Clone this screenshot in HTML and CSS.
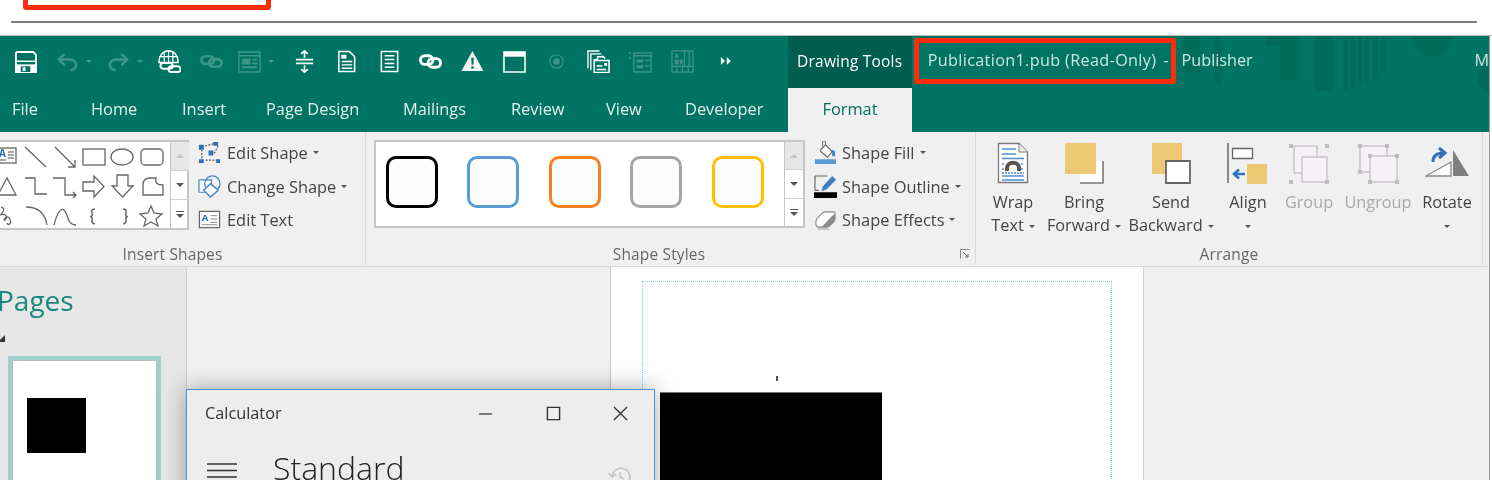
FILE: index.html
```html
<!DOCTYPE html>
<html lang="en">
<head>
<meta charset="utf-8">
<title>Publication1.pub (Read-Only) - Publisher</title>
<link rel="stylesheet" href="styles.css">
</head>
<body>
<div class="shot">
  <div class="top"><div class="rule"></div></div>
  <div class="redbox redbox-top"></div>
  <div class="window">
    <svg class="decor" viewBox="0 0 310 60" width="310" height="60" aria-hidden="true">
      <g fill="#006c5c">
        <rect x="3" y="0" width="17" height="36"/><rect x="35" y="0" width="7" height="48"/>
        <path d="M86 0H100V10H86Z"/><rect x="100" y="0" width="20" height="44"/><rect x="135" y="0" width="18" height="55"/>
        <rect x="163" y="0" width="5" height="54"/><rect x="171" y="0" width="4" height="52"/><rect x="178" y="0" width="4" height="50"/><rect x="185" y="0" width="4" height="47"/><rect x="193" y="0" width="5" height="44"/><rect x="201" y="0" width="4" height="38"/>
        <path d="M232 0A21 20 0 0 0 274 0Z"/><circle cx="310" cy="42" r="13"/>
      </g>
    </svg>
    <header class="titlebar">
      <div class="qat">
        <span class="qb"><svg class="ic" viewBox="0 0 24 24"><path d="M3 2H20L23 5V23H2V3Z" fill="none" stroke="#fff" stroke-width="2"/><path d="M2 11H22V12.500H2Z" fill="#fff"/><path d="M2 15H22V23H2Z" fill="#fff"/><path d="M7 17H17V23H7Z" fill="#007464"/><path d="M9 18H12V22H9Z" fill="#fff"/></svg></span>
        <span class="qb wide"><svg class="ic dim" viewBox="0 0 24 24"><path d="M9 4L3 10L9 16M3 10H14C19 10 21 13 21 16C21 19 18 21 15 21" fill="none" stroke="#fff" stroke-width="2.600"/></svg><i class="qcaret dimc"></i></span>
        <span class="qb wide"><svg class="ic dim" viewBox="0 0 24 24"><path d="M15 4L21 10L15 16M21 10H10C5 10 3 13 3 16C3 19 6 21 9 21" fill="none" stroke="#fff" stroke-width="2.600"/></svg><i class="qcaret dimc"></i></span>
        <span class="qb"><svg class="ic" viewBox="0 0 24 24"><g fill="none" stroke="#fff"><path d="M1 13C1 5 6 .8 11 .8S21 5 21 13Z" stroke-width="1.500"/><path d="M6.500 2V13M11 1V13M15.500 2V13M1 7H21" stroke-width="1.300"/><rect x="2.500" y="13.500" width="13" height="6" rx="3" stroke-width="2"/><rect x="11" y="17" width="12.500" height="6" rx="3" stroke-width="2"/></g></svg></span>
        <span class="qb"><svg class="ic dim" viewBox="0 0 24 24"><g fill="none" stroke="#fff" stroke-width="2.800"><rect x="1.500" y="6.500" width="13" height="8" rx="4"/><rect x="9.500" y="9.500" width="13" height="8" rx="4"/></g></svg></span>
        <span class="qb wide form"><svg class="ic dim" viewBox="0 0 24 24"><path d="M1 2H23V23H1ZM1 6H23" fill="none" stroke="#fff" stroke-width="1.500"/><path d="M4 9H13V15H4ZM15 9H20V11H15ZM15 13H20V15H15ZM4 17H20V19H4Z" fill="#fff"/></svg><i class="qcaret dimc"></i></span>
        <span class="qb"><svg class="ic" viewBox="0 0 24 24"><path d="M3 10H21M3 14H21M12 1V8M12 16V23M8.500 4L12 .8L15.500 4M8.500 20L12 23.200L15.500 20" fill="none" stroke="#fff" stroke-width="1.700"/></svg></span>
        <span class="qb"><svg class="ic" viewBox="0 0 24 24"><path d="M4 1.500H15L20.500 7V22.500H4Z" fill="none" stroke="#fff" stroke-width="1.600"/><path d="M6.500 5H12V9H6.500Z" fill="#fff"/><path d="M7 12H18M7 15.500H18M7 19H18" stroke="#fff" stroke-width="1.500"/></svg></span>
        <span class="qb shift"><svg class="ic" viewBox="0 0 24 24"><path d="M3.500 1.500H20.500V22.500H3.500Z" fill="none" stroke="#fff" stroke-width="1.600"/><path d="M7 6H17M7 10H17M7 14H17M7 18H17" stroke="#fff" stroke-width="1.500"/></svg></span>
        <span class="qb"><svg class="ic" viewBox="0 0 24 24"><g fill="none" stroke="#fff" stroke-width="3"><rect x="1.500" y="6" width="13" height="9" rx="4.500"/><rect x="9.500" y="9" width="13" height="9" rx="4.500"/></g></svg></span>
        <span class="qb"><svg class="ic" viewBox="0 0 24 24"><path d="M12 1L23.500 22H.5Z" fill="#f4f4f4"/><path d="M10.700 8H13.300L13 15.500H11ZM10.800 17H13.200V19.500H10.800Z" fill="#007464"/></svg></span>
        <span class="qb"><svg class="ic" viewBox="0 0 24 24"><path d="M1 2H23V23H1Z" fill="none" stroke="#fff" stroke-width="1.600"/><path d="M1 2H23V7H1Z" fill="#fff"/></svg></span>
        <span class="qb"><svg class="ic dim" viewBox="0 0 24 24"><circle cx="12" cy="12" r="7" fill="none" stroke="#fff" stroke-width="1.200"/><circle cx="12" cy="12" r="3.400" fill="#fff"/></svg></span>
        <span class="qb"><svg class="ic" viewBox="0 0 24 24"><g fill="none" stroke="#fff" stroke-width="1.400"><path d="M1 19V1H13"/><path d="M4 21V4H15"/><path d="M7 10H11V7H17L19 9"/></g><path d="M7.500 11H23V23.500H7.500Z" fill="#007464" stroke="#fff" stroke-width="1.600"/><path d="M18 13.500H21V16.500H18ZM10 16H16V17.500H10ZM10 19.500H20V21H10Z" fill="#fff"/><path d="M16 5L19 8H16Z" fill="#fff"/></svg></span>
        <span class="qb"><svg class="ic dim" viewBox="0 0 24 24"><path d="M5 3H23V23H5ZM5 6H23" fill="none" stroke="#fff" stroke-width="1.400"/><path d="M0 2H2V4H0ZM0 7H2V9H0ZM8 10H15V13H8ZM17 10H21V11.500H17ZM8 16H15V19H8ZM17 16H21V17.500H17Z" fill="#fff"/></svg></span>
        <span class="qb"><svg class="ic dim" viewBox="0 0 24 24"><path d="M1 1H23V23H1ZM1 17H23M14 1V17M19 1V17M6 17V23M12 17V23M18 17V23" fill="none" stroke="#fff" stroke-width="1.300"/><path d="M5 4L7 4L8 8H4ZM4 10H8V15H4ZM9 10H12V15H9Z" fill="#fff"/></svg></span>
        <span class="qb"><svg class="ic more" viewBox="0 0 24 24"><path d="M5 5L12 12L5 19ZM15 5L22 12L15 19Z" fill="#fff"/></svg></span>
      </div>
      <div class="context">Drawing Tools</div>
      <div class="doc-title">Publication1.pub (Read-Only)</div>
      <div class="app-dash">-</div>
      <div class="app-name">Publisher</div>
      <div class="user">M</div>
    </header>
    <div class="redbox redbox-title"></div>
    <nav class="tabs">
      <span class="tab">File</span><span class="tab">Home</span><span class="tab">Insert</span><span class="tab">Page Design</span><span class="tab">Mailings</span><span class="tab">Review</span><span class="tab">View</span><span class="tab">Developer</span><span class="tab active">Format</span>
    </nav>
    <section class="ribbon">
      <div class="group g1">
        <div class="gbody">
          <div class="gallery shapes">
            <svg class="shapes-svg" viewBox="0 141 170 86" width="170" height="86">
              <g fill="none" stroke="#666" stroke-width="1.300">
                <rect x="-5" y="147" width="21" height="15" fill="#fff"/>
                <path d="M8 151H14M8 154H14M8 157H14M-3 159H6" stroke="#888"/>
                <path d="M25 146L46 166M55 146L75 166M68 166H75V159"/>
                <rect x="83" y="148" width="22" height="16"/>
                <ellipse cx="122" cy="156" rx="11" ry="8"/>
                <rect x="141" y="148" width="22" height="16" rx="4"/>
                <path d="M-2 194L7 177L16 194Z"/>
                <path d="M25 177H35V193H47M53 177H65V194H76M73 191L76 194L73 197"/>
                <path d="M83 181H94V175L104 185.500L94 196V190H83Z"/>
                <path d="M117 174H128V185H133L122.500 196L112 185H117Z"/>
                <path d="M143 194V184Q143 177 150 177H156Q154 184 163 184V194Z"/>
                <path d="M1 206C6 207 3 212 0 214C5 212 9 216 5 219C2 221 7 212 10 218C12 223 8 225 7 222"/>
                <path d="M26 206Q44 206 47 224M54 224C58 208 63 205 66 212C69 220 70 224 76 224"/>
                <path d="M95 208Q91 208 92 212T90 215.500Q93 216 92 219T95 223M123 208Q127 208 126 212T128 215.500Q125 216 126 219T123 223" stroke-width="1.500"/>
                <path d="M151 205L154 212L162 213L156 218L158 225L151 221L144 225L146 218L140 213L148 212Z"/>
              </g>
              <text class="a-glyph" x="-1" y="156">A</text>
            </svg>
            <div class="scroll"><span class="sb up"><i class="tri-up"></i></span><span class="sb"><i class="tri-down"></i></span><span class="sb"><i class="bar"></i><i class="tri-down"></i></span></div>
          </div>
          <div class="cmds">
            <div class="cmd"><svg class="cic wider" viewBox="0 0 24 24"><path d="M4 6L16 3M21 5L17 13M4 9V19M8 20H22" fill="none" stroke="#555" stroke-width="1.200" stroke-dasharray="2 1.500"/><path d="M1 4H6V9H1ZM16 1H21V5H16ZM11 10H16V15H11ZM1 19H6V23H1ZM19 19H23V23H19Z" fill="#2f6fb5"/></svg>Edit Shape<i class="caret"></i></div>
            <div class="cmd"><svg class="cic wider" viewBox="0 0 24 24"><path d="M1 5H14V18H1Z" fill="#fff" stroke="#4a86c8" stroke-width="1.300"/><circle cx="15" cy="9" r="8" fill="none" stroke="#4a86c8" stroke-width="1.300"/><path d="M13 9L21 16L13 23L6 16Z" fill="#fff" stroke="#4a86c8" stroke-width="1.500"/></svg>Change Shape<i class="caret"></i></div>
            <div class="cmd"><svg class="cic wider" viewBox="0 0 24 24"><path d="M1.500 3.500H22.500V20.500H1.500Z" fill="#fff" stroke="#666" stroke-width="1.300"/><path d="M13 8H20M13 11.500H20M13 15H20M4 17.500H20" stroke="#888" stroke-width="1"/><text class="a-glyph" x="4" y="14">A</text></svg>Edit Text</div>
          </div>
        </div>
        <div class="glabel">Insert Shapes</div>
      </div>
      <div class="group g2">
        <div class="gbody">
          <div class="gallery styles">
            <div class="swatches">
              <span class="swatch s-black"></span><span class="swatch s-blue"></span><span class="swatch s-orange"></span><span class="swatch s-gray"></span><span class="swatch s-gold"></span>
            </div>
            <div class="scroll"><span class="sb up"><i class="tri-up"></i></span><span class="sb"><i class="tri-down"></i></span><span class="sb"><i class="bar"></i><i class="tri-down"></i></span></div>
          </div>
          <div class="cmds">
            <div class="cmd"><svg class="cic" viewBox="0 0 24 24"><path d="M1 19H23V24H1Z" fill="#5b9bd5"/><path d="M7 9L12 4L19 11L14 17L7 11Z" fill="#fff" stroke="#666" stroke-width="1.200"/><path d="M12 5V0H9V6" fill="none" stroke="#666" stroke-width="1"/><path d="M19 9L22 11V16H19Z" fill="#3d7fc1"/></svg>Shape Fill<i class="caret"></i></div>
            <div class="cmd"><svg class="cic" viewBox="0 0 24 24"><path d="M1 1H14M1 1V16M1 16H5" fill="none" stroke="#666" stroke-width="1.200"/><path d="M19 1L23 5L13 15L8 17L9 12Z" fill="#3d7fc1"/><path d="M0 18H24V24H0Z" fill="#000"/></svg>Shape Outline<i class="caret"></i></div>
            <div class="cmd"><svg class="cic" viewBox="0 0 24 24"><path d="M2 14Q2 12 4 10L9 5Q10 4 12 4H20Q22 4 22 6V11Q22 13 20 15L16 19Q15 20 13 20H5Q2 20 2 17Z" fill="#fff" stroke="#888" stroke-width="1.200"/><path d="M22 6V11Q22 13 20 15L16 19Q15 20 13 20H8L18 9Z" fill="#8a8a8a"/><path d="M4 22H16" stroke="#c9c9c9" stroke-width="2"/></svg>Shape Effects<i class="caret"></i></div>
          </div>
        </div>
        <div class="glabel">Shape Styles</div>
        <svg class="launcher" viewBox="0 0 10 10" width="10" height="10"><path d="M.5 .5H9.500V9.500" fill="none" stroke="#888" transform="rotate(-90 5 5)"/><path d="M3 3L8 8M5 8H8V5" fill="none" stroke="#666"/></svg>
      </div>
      <div class="group g3">
        <div class="arrange">
          <div class="item"><svg class="big" viewBox="0 0 44 44"><path d="M7.500 1.500H28L36.500 10V40.500H7.500Z" fill="#fff" stroke="#777" stroke-width="1.300"/><path d="M28 1.500V10H36.500" fill="#eee" stroke="#777"/><path d="M11 7H25M11 12H25M11 16.500H33M11 34H33M11 38H33" stroke="#4f8fd0" stroke-width="1.600"/><path d="M11 22H14M11 27H14M30 22H33M30 27H33M11 31H33" stroke="#4f8fd0" stroke-width="1.600" stroke-dasharray="2 1"/><path d="M16 29V26C16 19 28 19 28 26V29" fill="none" stroke="#555" stroke-width="4"/></svg><div class="lbl">Wrap<br>Text<i class="caret"></i></div></div>
          <div class="item"><svg class="big" viewBox="0 0 44 44"><path d="M18 19H41V41H18Z" fill="#fff"/><path d="M41 19V41H18" fill="none" stroke="#777" stroke-width="1.600"/><path d="M3 1H34V32H3Z" fill="#ecc873"/></svg><div class="lbl">Bring<br>Forward<i class="caret"></i></div></div>
          <div class="item"><svg class="big" viewBox="0 0 44 44"><path d="M3 1H33V32H3Z" fill="#ecc873"/><path d="M17 19H41V41H17Z" fill="#fff" stroke="#666" stroke-width="1.800"/></svg><div class="lbl">Send<br>Backward<i class="caret"></i></div></div>
          <div class="item"><svg class="big" viewBox="0 0 44 44"><path d="M2 1V41" stroke="#666" stroke-width="1.500"/><path d="M6.500 6.500H26.500V16.500H6.500Z" fill="#fff" stroke="#666" stroke-width="1.300"/><path d="M21 22H41V42H21Z" fill="#ecc873"/><path d="M19 32H9M13 27.500L8 32L13 36.500" fill="none" stroke="#2f74bd" stroke-width="2.600"/></svg><div class="lbl">Align<br><i class="caret solo"></i></div></div>
          <div class="item off"><svg class="big" viewBox="0 0 44 44"><g fill="#f5f1f6" stroke="#c3bfc3" stroke-width="1.300"><rect x="7" y="4" width="23" height="27"/><rect x="15" y="15" width="25" height="25"/></g><path d="M2 2H6V6H2ZM38 2H42V6H38ZM2 38H6V42H2ZM38 38H42V42H38Z" fill="#bdbdbd"/></svg><div class="lbl">Group</div></div>
          <div class="item off"><svg class="big" viewBox="0 0 44 44"><g fill="#f5f1f6" stroke="#c3bfc3" stroke-width="1.300"><rect x="4" y="4" width="27" height="26"/><rect x="14" y="14" width="27" height="26"/></g><path d="M2 2H6V6H2ZM29 2H33V6H29ZM2 28H6V32H2ZM12 12H16V16H12ZM39 12H43V16H39ZM12 38H16V42H12ZM39 38H43V42H39Z" fill="#bdbdbd"/></svg><div class="lbl">Ungroup</div></div>
          <div class="item"><svg class="big" viewBox="0 0 44 44"><path d="M1 34L26 20V34Z" fill="#fff" stroke="#888" stroke-width="1.300"/><path d="M28 8L44 34H28Z" fill="#7f7f7f"/><path d="M8 20Q8 11 18 11M14 6L20 11L14 16" fill="none" stroke="#2f74bd" stroke-width="3"/></svg><div class="lbl">Rotate<br><i class="caret solo"></i></div></div>
        </div>
        <div class="glabel">Arrange</div>
      </div>
    </section>
    <main class="workspace">
      <aside class="pages">
        <h2 class="pages-title">Pages</h2>
        <i class="collapse"></i>
        <div class="thumb"><div class="thumb-page"><div class="thumb-square"></div></div></div>
      </aside>
      <div class="canvas-left"></div>
      <div class="page">
        <div class="guide"></div>
        <div class="tick"></div>
        <div class="black"></div>
      </div>
      <div class="canvas-right"></div>
    </main>
    <div class="calc">
      <div class="calc-title"><span class="calc-name">Calculator</span>
        <span class="calc-btns">
          <svg viewBox="0 0 16 16" width="15" height="15"><path d="M1 8.500H15" stroke="#333" stroke-width="1.300"/></svg>
          <svg viewBox="0 0 16 16" width="15" height="15"><path d="M1.500 1.500H14.500V14.500H1.500Z" fill="none" stroke="#333" stroke-width="1.500"/></svg>
          <svg viewBox="0 0 16 16" width="15" height="15"><path d="M1 1L15 15M15 1L1 15" stroke="#333" stroke-width="1.400"/></svg>
        </span>
      </div>
      <div class="calc-head">
        <svg class="burger" viewBox="0 0 30 17" width="30" height="17"><path d="M0 1H30M0 7.500H30M0 14H30" stroke="#333" stroke-width="1.300"/></svg>
        <span class="calc-mode">Standard</span>
        <svg class="history" viewBox="0 0 24 24" width="24" height="24"><path d="M4 12A9 9 0 1 1 7 19M1 8L4 12L8 9M12 7V12L16 14" fill="none" stroke="#c4c4c4" stroke-width="1.600"/></svg>
      </div>
    </div>
  </div>
</div>
</body>
</html>
```

FILE: styles.css
```css
* { box-sizing: border-box; }
html, body { margin: 0; padding: 0; height: 480px; overflow: hidden; background: #fff; }
body { font-family: "Open Sans", "Noto Sans", sans-serif; }

.shot { position: relative; width: 1492px; height: 480px; overflow: hidden; filter: blur(.35px); }

.top { height: 36px; padding: 21px 15px 0 11px; border-bottom: 1px solid #bdbdbd; }
.rule { height: 2px; background: #7d7d7d; }

.redbox { position: absolute; border: 5px solid #ff2c0c; border-radius: 3px; pointer-events: none; }
.redbox-top { left: 23px; top: -20px; width: 248px; height: 30px; }
.redbox-title { left: 914px; top: 2px; width: 262px; height: 46px; }

.window { position: relative; width: 1490px; height: 444px; border-right: 1px solid #9a9a9a; background: #f0f0f0; overflow: hidden; }
.window::before { content: ""; position: absolute; left: 0; right: 0; top: 0; height: 96px; background: #007464; }
.decor { position: absolute; left: 1180px; top: 0; z-index: 0; }

.titlebar { position: relative; z-index: 1; display: flex; height: 52px; align-items: stretch; color: #fff; }
.tabs, .ribbon, .workspace { z-index: 1; }

.qat { width: 788px; display: flex; align-items: center; padding-left: 4.500px; padding-bottom: 2px; }
.qb { width: 42px; flex: none; display: flex; align-items: center; justify-content: center; }
.qb.wide { width: 51px; justify-content: flex-start; padding-left: 9.500px; }
.qb.wide.form { padding-left: 5px; }
.qb.shift { margin-left: 1px; margin-right: -1px; }
.ic { width: 23px; height: 23px; display: block; }
.ic.dim { opacity: .24; }
.ic.more { width: 14px; height: 14px; }
.qcaret { margin-left: 7px; border: 3.500px solid transparent; border-top-color: #fff; border-bottom: 0; }
.qcaret.dimc { opacity: .3; }

.context { width: 124px; background: #005e50; display: flex; align-items: center; justify-content: center; font-size: 15.500px; letter-spacing: .2px; padding-bottom: 3px; white-space: nowrap; }
.doc-title, .app-dash, .app-name, .user { display: flex; align-items: center; color: #cfe6e1; font-size: 16.200px; padding-bottom: 5px; white-space: nowrap; }
.doc-title { margin-left: 16px; width: 236px; letter-spacing: .35px; }
.app-dash { width: 18px; }
.app-name { width: 293px; }

.tabs { position: relative; display: grid; grid-template-columns: 79px 91px 84px 137px 108px 95px 79px 103px 124px; padding-left: 12px; height: 44px; color: #e3f1ee; font-size: 16.400px; }
.tab { display: flex; align-items: center; white-space: nowrap; padding-bottom: 3px; }
.tab.active { background: #f0f0f0; color: #00705f; justify-content: center; }

.ribbon { position: relative; display: flex; height: 135px; background: #f0f0f0; border-bottom: 1px solid #d8d8d8; color: #444; }
.group { position: relative; display: flex; flex-direction: column; border-right: 1px solid #d9d9d9; padding-top: 8px; height: 133px; }
.g1 { width: 366px; }
.g2 { width: 610px; padding-left: 8px; }
.g3 { width: 507px; padding-left: 8px; padding-top: 0; }
.gbody { display: flex; gap: 9px; align-items: flex-start; }
.glabel { margin-top: auto; height: 22px; display: flex; align-items: center; justify-content: center; font-size: 15.500px; letter-spacing: .15px; color: #666; white-space: nowrap; }
.g1 .glabel { padding-right: 20px; }
.g2 .glabel { padding-right: 31px; }
.g3 .glabel { padding-right: 8px; }
.launcher { position: absolute; right: 5px; bottom: 6px; }

.gallery { display: flex; background: #fff; border: 2px solid #c6c6c6; }
.shapes { width: 189px; height: 90px; border-left: 0; }
.shapes-svg { display: block; flex: none; }
.styles { width: 431px; height: 88px; }
.a-glyph { font-family: "Open Sans", sans-serif; font-size: 10px; font-weight: 700; fill: #2f6fb5; }
.swatches { flex: 1; display: grid; grid-template-columns: repeat(5, 52px); column-gap: 29.500px; padding: 14px 0 0 9.500px; }
.swatch { width: 52px; height: 52px; border: 3px solid #000; border-radius: 10px; background: #fcfcfc; }
.s-blue { border-color: #5b9bd5; }
.s-orange { border-color: #f58020; }
.s-gray { border-color: #a5a5a5; }
.s-gold { border-color: #ffc000; }

.scroll { width: 19px; flex: none; display: flex; flex-direction: column; border-left: 1px solid #c6c6c6; }
.sb { flex: 1; display: flex; flex-direction: column; align-items: center; justify-content: center; gap: 2px; }
.sb + .sb { border-top: 1px solid #d0d0d0; }
.sb.up { background: #e6e6e6; }
.tri-up { border: 4px solid transparent; border-bottom-color: #c4c4c4; border-top: 0; }
.tri-down { border: 4px solid transparent; border-top-color: #555; border-bottom: 0; }
.bar { width: 8px; height: 1px; background: #555; }

.cmds { display: flex; flex-direction: column; margin-top: -4px; }
.cmd { display: flex; align-items: center; height: 33.500px; font-size: 16.400px; color: #444; white-space: nowrap; }
.cic { width: 23px; height: 23px; margin-right: 5px; flex: none; }
.cic.wider { margin-right: 6px; }
.caret { display: inline-block; border: 3.500px solid transparent; border-top-color: #555; border-bottom: 0; margin-left: 5px; vertical-align: middle; }
.caret.solo { margin-left: 0; }

.arrange { display: grid; grid-template-columns: 58px 84px 90px 64px 58px 80px 58px; padding-top: 10px; }
.item { display: flex; flex-direction: column; align-items: center; font-size: 16.300px; color: #444; }
.item.off { color: #a8a8a8; }
.big { width: 44px; height: 44px; display: block; }
.lbl { margin-top: 5px; line-height: 23px; text-align: center; white-space: nowrap; }

.workspace { position: relative; display: flex; height: 214px; background: #f0f0f0; }
.pages { width: 187px; flex: none; background: #e6e6e6; border-right: 1px solid #cfcfcf; padding-left: 8px; position: relative; }
.pages-title { margin: 15px 0 0 -11px; font-size: 28px; font-weight: 400; line-height: 36px; color: #19897f; }
.collapse { position: absolute; left: -2px; top: 68px; border-style: solid; border-width: 0 0 7px 7px; border-color: transparent transparent #333 transparent; }
.thumb { width: 153px; height: 180px; margin-top: 38px; border: 4px solid #9dd1ca; }
.thumb-page { height: 100%; background: #fff; border: 1px solid #bbb; padding: 37px 0 0 14px; }
.thumb-square { width: 59px; height: 55px; background: #000; }

.canvas-left { width: 424px; flex: none; border-right: 1px solid #c9c9c9; }
.page { position: relative; width: 533px; flex: none; background: #fff; border-right: 1px solid #d2d2d2; }
.guide { position: absolute; left: 31px; top: 14px; width: 470px; height: 300px; border: 1px dotted #86c4f6; }
.tick { position: absolute; left: 165px; top: 109px; width: 1.500px; height: 5px; background: #555; }
.black { position: absolute; left: 49px; top: 125px; width: 222px; height: 120px; background: #000; border-top: 1px solid #777; }
.canvas-right { flex: 1; }

.calc { position: absolute; z-index: 2; left: 186px; top: 353px; width: 469px; height: 120px; background: #ededed; border: 1.500px solid #4a94de; box-shadow: 0 0 22px rgba(0,0,0,.34); }
.calc-title { display: flex; align-items: center; justify-content: space-between; height: 46px; padding: 0 26px 0 18px; font-size: 16.300px; color: #333; }
.calc-btns { display: flex; gap: 52.500px; width: 150px; }
.calc-head { position: relative; display: flex; align-items: flex-start; padding-left: 20px; height: 60px; }
.burger { margin-top: 27px; flex: none; }
.calc-mode { margin: 10px 0 0 36px; font-size: 32px; font-weight: 300; line-height: 44px; color: #222; }
.history { margin: 29px 0 0 auto; position: relative; right: 22px; }
```
